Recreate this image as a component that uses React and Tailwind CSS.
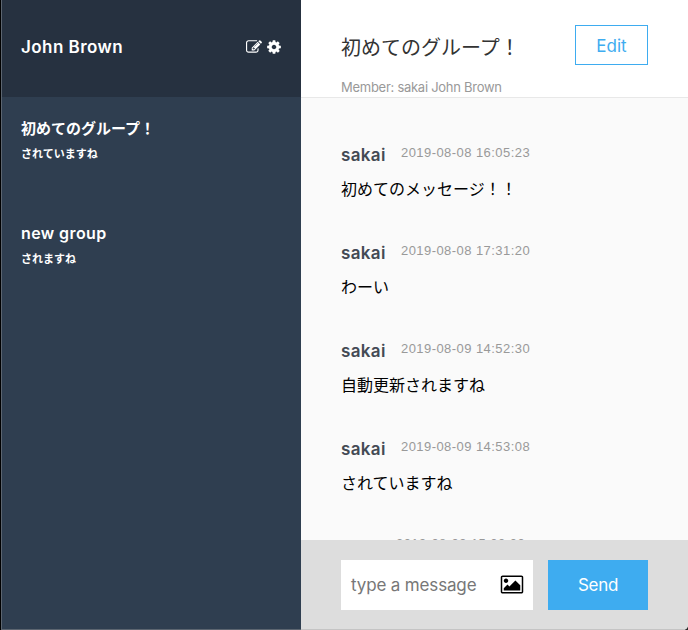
const groups = [
  { name: "初めてのグループ！", last: "されていますね", nameClass: "text-[15px]" },
  { name: "new group", last: "されますね", nameClass: "text-[16px] tracking-[0.4px]" },
];

const messages = [
  { user: "sakai", date: "2019-08-08 16:05:23", text: "初めてのメッセージ！！" },
  { user: "sakai", date: "2019-08-08 17:31:20", text: "わーい" },
  { user: "sakai", date: "2019-08-09 14:52:30", text: "自動更新されますね" },
  { user: "sakai", date: "2019-08-09 14:53:08", text: "されていますね" },
];

function EditIcon() {
  return (
    <svg className="size-4" viewBox="0 0 1792 1792" fill="currentColor">
      <path d="M888 1184l116-116-152-152-116 116v56h96v96h56zm440-720q-16-16-33 1l-350 350q-17 17-1 33t33-1l350-350q17-17 1-33zm80 594v190q0 119-84.5 203.5t-203.5 84.5h-832q-119 0-203.5-84.5t-84.5-203.5v-832q0-119 84.5-203.5t203.5-84.5h832q63 0 117 25 15 7 18 23 3 17-9 29l-49 49q-14 14-32 8-23-6-45-6h-832q-66 0-113 47t-47 113v832q0 66 47 113t113 47h832q66 0 113-47t47-113v-126q0-13 9-22l64-64q15-15 35-7t20 29zm-96-738l288 288-672 672h-288v-288zm444 132l-92 92-288-288 92-92q28-28 68-28t68 28l152 152q28 28 28 68t-28 68z" />
    </svg>
  );
}

function CogIcon() {
  return (
    <svg className="h-4 w-[14px]" viewBox="128 0 1536 1792" fill="currentColor">
      <path d="M1152 896q0-106-75-181t-181-75-181 75-75 181 75 181 181 75 181-75 75-181zm512-109v222q0 12-8 23t-20 13l-185 28q-19 54-39 91 35 50 107 138 10 12 10 25t-9 23q-27 37-99 108t-94 71q-12 0-26-9l-138-108q-44 23-91 38-16 136-29 186-7 28-36 28h-222q-14 0-24.5-8.5t-11.5-21.5l-28-184q-49-16-90-37l-141 107q-10 9-25 9-14 0-25-11-126-114-165-168-7-10-7-23 0-12 8-23 15-21 51-66.5t54-70.5q-27-50-41-99l-183-27q-13-2-21-12.5t-8-23.5v-222q0-12 8-23t19-13l186-28q14-46 39-92-40-57-107-138-10-12-10-24 0-10 9-23 26-36 98.5-107.5t94.5-71.5q13 0 26 10l138 107q44-23 91-38 16-136 29-186 7-28 36-28h222q14 0 24.5 8.5t11.5 21.5l28 184q49 16 90 37l142-107q9-9 24-9 13 0 25 10 129 119 165 170 7 8 7 22 0 12-8 23-15 21-51 66.5t-54 70.5q26 50 41 98l183 28q13 2 21 12.5t8 23.5z" />
    </svg>
  );
}

function PictureIcon() {
  return (
    <svg className="-mt-0.5 h-[21px] w-6 shrink-0" viewBox="0 0 2048 1792" fill="currentColor">
      <path d="M704 576q0 80-56 136t-136 56-136-56-56-136 56-136 136-56 136 56 56 136zm1024 384v448h-1408v-192l320-320 160 160 512-512zm96-704h-1600q-13 0-22.5 9.5t-9.5 22.5v1216q0 13 9.5 22.5t22.5 9.5h1600q13 0 22.5-9.5t9.5-22.5v-1216q0-13-9.5-22.5t-22.5-9.5zm160 32v1216q0 66-47 113t-113 47h-1600q-66 0-113-47t-47-113v-1216q0-66 47-113t113-47h1600q66 0 113 47t47 113z" />
    </svg>
  );
}

function Sidebar() {
  return (
    <aside className="flex w-[301px] shrink-0 flex-col border-l border-black bg-[#2f3e50] text-white">
      <div className="flex min-h-0 flex-1 flex-col border-b border-l border-[#5c6570]">
        <header className="flex h-[97px] shrink-0 items-start justify-between bg-[#263140] pt-[37px] pr-5 pl-[19px]">
          <h1 className="text-[17px] leading-5 font-semibold tracking-[0.45px]">John Brown</h1>
          <div className="flex gap-[5px] pt-0.5">
            <EditIcon />
            <CogIcon />
          </div>
        </header>
        <ul className="flex flex-col gap-10 pt-5 pl-[19px]">
          {groups.map((g) => (
            <li key={g.name} className="h-[65px]">
              <p className={`${g.nameClass} h-[23px] leading-[23px] font-semibold`}>{g.name}</p>
              <p className="mt-[6px] text-[11px] leading-[17px] font-bold">{g.last}</p>
            </li>
          ))}
        </ul>
      </div>
    </aside>
  );
}

function Timestamp({ children }) {
  return (
    <time className="block font-['Liberation_Sans',sans-serif] text-[13px] leading-[19px] tracking-[0.44px] whitespace-nowrap text-[#999]">
      {children}
    </time>
  );
}

function Message({ user, date, text }) {
  return (
    <li className="h-[98px]">
      <div className="flex h-6 items-start">
        <span className="w-[60px] text-[17px] leading-[25px] font-semibold tracking-[0.35px] text-[#434a54]">{user}</span>
        <Timestamp>{date}</Timestamp>
      </div>
      <p className="mt-[10px] text-[16px] leading-6 text-black">{text}</p>
    </li>
  );
}

export default function App() {
  return (
    <div className="flex h-[630px] w-[688px] overflow-hidden bg-[#2b2b2b] font-['Inter','Noto_Sans_CJK_JP',sans-serif]">
      <Sidebar />
      <main className="flex min-w-0 flex-1 flex-col overflow-hidden rounded-br-[5px] bg-[#fafafa]">
        <header className="flex h-[98px] shrink-0 justify-between border-b border-[#e8e8e8] bg-white px-10 pt-[25px]">
          <div>
            <h2 className="h-[44px] text-[20px] leading-[46px] text-[#333]">初めてのグループ！</h2>
            <p className="mt-[9px] text-[13px] leading-[18px] tracking-[-0.27px] text-[#999]">Member: sakai John Brown</p>
          </div>
          <button className="flex h-10 w-[73px] items-center justify-center border border-[#3eacf0] pt-[3px] text-[17px] text-[#3eacf0]">
            Edit
          </button>
        </header>
        <ul className="min-h-0 flex-1 overflow-hidden pt-[45px] pl-10">
          {messages.map((m) => (
            <Message key={m.date} {...m} />
          ))}
          <li className="-mt-px pl-[55px]">
            <Timestamp>2019-08-09 15:00:00</Timestamp>
          </li>
        </ul>
        <footer className="flex h-[90px] shrink-0 gap-[15px] border-b border-[#c4c4c4] bg-[#ddd] px-10 pt-5">
          <div className="flex h-[50px] w-48 items-center justify-between bg-white pr-[9px] pl-[10px]">
            <span className="pt-[2px] text-[17px] tracking-[-0.15px] whitespace-nowrap text-[#777]">type a message</span>
            <PictureIcon />
          </div>
          <button className="h-[50px] w-[100px] bg-[#3eacf0] pt-[2px] text-[17px] tracking-[-0.3px] text-white">Send</button>
        </footer>
      </main>
    </div>
  );
}
